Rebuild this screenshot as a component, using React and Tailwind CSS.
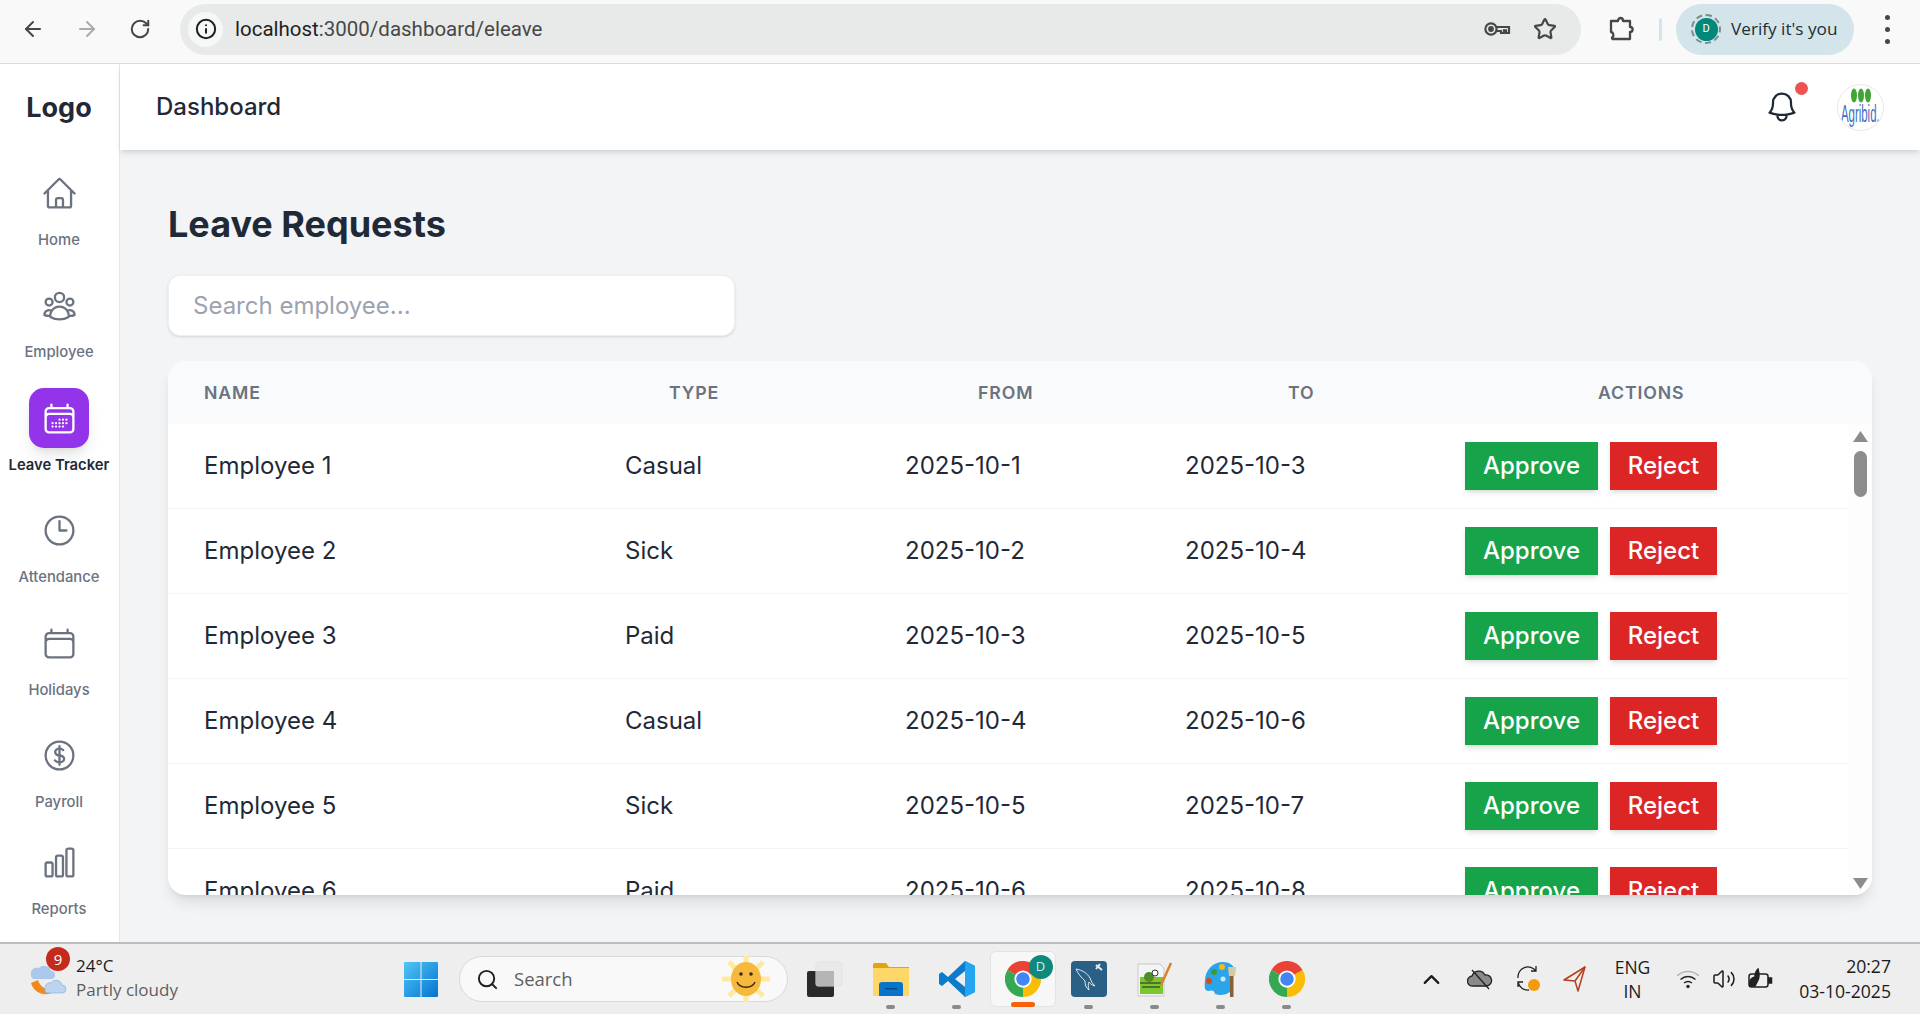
import { ArrowLeft, ArrowRight, RotateCw, Info, Star, ChevronUp, Search, Volume2 } from 'lucide-react';
import {
  HiOutlineHome,
  HiOutlineUserGroup,
  HiOutlineCalendarDays,
  HiOutlineClock,
  HiOutlineCalendar,
  HiOutlineCurrencyDollar,
  HiOutlineChartBar,
  HiOutlineBell,
} from 'react-icons/hi2';

const navItems = [
  { label: 'Home', icon: HiOutlineHome },
  { label: 'Employee', icon: HiOutlineUserGroup },
  { label: 'Leave Tracker', icon: HiOutlineCalendarDays, active: true },
  { label: 'Attendance', icon: HiOutlineClock },
  { label: 'Holidays', icon: HiOutlineCalendar },
  { label: 'Payroll', icon: HiOutlineCurrencyDollar },
  { label: 'Reports', icon: HiOutlineChartBar, tight: true },
];

const leaveTypes = ['Casual', 'Sick', 'Paid'];
const employees = [1, 2, 3, 4, 5, 6].map((n) => ({
  name: `Employee ${n}`,
  type: leaveTypes[(n - 1) % 3],
  from: `2025-10-${n}`,
  to: `2025-10-${n + 2}`,
}));

function ChromeLogo({ size = 36 }) {
  return (
    <svg width={size} height={size} viewBox="0 0 48 48">
      <path d="M24 24L3.2 12A24 24 0 0 1 44.8 12Z" fill="#ea4335" />
      <path d="M24 24L3.2 12A24 24 0 0 0 24 48Z" fill="#34a853" />
      <path d="M24 24L44.8 12A24 24 0 0 1 24 48Z" fill="#fbbc04" />
      <circle cx="24" cy="24" r="11.5" fill="#fff" />
      <circle cx="24" cy="24" r="9" fill="#4285f4" />
    </svg>
  );
}

function KeyIcon() {
  return (
    <svg width="28" height="16" viewBox="0 0 28 16" fill="none" stroke="#474747" strokeWidth="2.2">
      <circle cx="8" cy="8" r="5.6" />
      <circle cx="8" cy="8" r="1.8" fill="#474747" />
      <path d="M13.5 6h12.5v6h-3v-2.6h-2V12h-3V10h-4.5" />
    </svg>
  );
}

function PuzzleIcon() {
  return (
    <svg width="26" height="26" viewBox="0 0 26 26" fill="none" stroke="#474747" strokeWidth="2.3" strokeLinejoin="round">
      <path d="M2 5h7c0-4 5-4 5 0h7v6c3.500 0 3.500 5 0 5v7H3.500l-.5-1 .1-.5c2-1.500 1.700-5-1.100-5.500z" />
    </svg>
  );
}

function WindowsLogo() {
  return (
    <svg width="34" height="35" viewBox="0 0 34 35">
      <defs>
        <linearGradient id="winBlue" x1="0" y1="0" x2="1" y2="1">
          <stop offset="0" stopColor="#4fc6f8" />
          <stop offset="1" stopColor="#0673cf" />
        </linearGradient>
      </defs>
      <path d="M1 0h15.500v17H0V1a1 1 0 0 1 1-1zM17.500 0H33a1 1 0 0 1 1 1v16H17.500zM0 18h16.500v17H1a1 1 0 0 1-1-1zM17.500 18H34v16a1 1 0 0 1-1 1H17.500z" fill="url(#winBlue)" />
    </svg>
  );
}

function WeatherIcon() {
  return (
    <svg width="42" height="46" viewBox="0 0 42 46">
      <path d="M4 27c3 11 17 15 24 7-8 1-15-3-17-10z" fill="#f08a1d" />
      <path d="M4 19a6 6 0 0 1 8-7 7 7 0 0 1 12 3 4 4 0 0 1 0 8H6a4 4 0 0 1-2-4z" fill="#a9c8ec" />
      <path d="M18 33a5 5 0 0 1 6-6 6 6 0 0 1 11 2 4 4 0 0 1 0 8H20a3 3 0 0 1-2-4z" fill="#bcd4ef" stroke="#7fa8d8" strokeWidth="0.6" />
    </svg>
  );
}

function SunFace() {
  return (
    <svg width="60" height="46" viewBox="0 0 60 46">
      <g stroke="#ffe9a0" strokeWidth="5">
        <path d="M30 0v46M6 23h48M13 6l34 34M47 6L13 40" />
      </g>
      <ellipse cx="30" cy="23" rx="15" ry="17" fill="#f6b93b" />
      <circle cx="25" cy="18" r="1.800" fill="#3a2a10" />
      <circle cx="35" cy="18" r="1.800" fill="#3a2a10" />
      <path d="M21 26c3 7 15 7 18 0" fill="none" stroke="#3a2a10" strokeWidth="1.500" />
    </svg>
  );
}

function TaskViewIcon() {
  return (
    <svg width="36" height="36" viewBox="0 0 36 36">
      <rect x="0" y="10" width="27" height="26" rx="2" fill="#2a2a2a" />
      <rect x="9" y="1" width="26" height="24" rx="2" fill="#e8e8e8" fillOpacity="0.9" stroke="#e2e2e2" />
      <rect x="9" y="10" width="18" height="15" fill="#b5b5b5" />
    </svg>
  );
}

function FolderIcon() {
  return (
    <svg width="36" height="34" viewBox="0 0 36 34">
      <path d="M0 3a2 2 0 0 1 2-2h11l3 4h20v29H0z" fill="#e0a410" />
      <rect y="6" width="36" height="28" fill="#ffd768" />
      <path d="M6 23a3 3 0 0 1 3-3h18a3 3 0 0 1 3 3v11H6z" fill="#0a74c9" />
      <rect x="12" y="26" width="12" height="1.500" fill="#064b85" />
    </svg>
  );
}

function VsCodeIcon() {
  return (
    <svg width="36" height="36" viewBox="0 0 36 36">
      <path d="M26 0l10 5v26l-10 5L9 20 3 25l-3-2v-10l3-2 6 5zM26 10l-10 8 10 8z" fill="#0a7ccb" />
      <path d="M26 0l10 5v26l-10 5z" fill="#24a5ef" />
    </svg>
  );
}

function WorkbenchIcon() {
  return (
    <svg width="36" height="36" viewBox="0 0 36 36">
      <rect width="36" height="36" rx="4" fill="#2a5f86" />
      <path d="M5 8c6 1 11 4 14 9 1 3 2 5 5 8-3-1-5-2-6-4-1 2-1 5 0 8-3-2-4-5-4-9-3-3-7-7-9-12z" fill="none" stroke="#dfe8ee" strokeWidth="1" />
      <path d="M25 4l6 5M29 3l-4 5" stroke="#e7eef3" strokeWidth="2" />
    </svg>
  );
}

function NotepadIcon() {
  return (
    <svg width="36" height="36" viewBox="0 0 36 36">
      <path d="M1 3h22l4 4v28H1z" fill="#f4f4f4" stroke="#c9c9c9" />
      <rect x="3" y="16" width="23" height="17" fill="#7cc62f" />
      <circle cx="12" cy="16" r="5" fill="#4f8f22" />
      <circle cx="18" cy="12" r="3" fill="#fff" stroke="#333" />
      <path d="M3 22h22M5 26h18" stroke="#222" strokeWidth="1" />
      <path d="M24 24L34 2" stroke="#d9822b" strokeWidth="2.500" />
    </svg>
  );
}

function PaintIcon() {
  return (
    <svg width="34" height="36" viewBox="0 0 34 36">
      <path d="M1 20C1 8 10 1 19 1c6 0 10 3 11 6l-4 24c-4 3-10 4-15 2-1-5-4-3-7-3-3 0-4-4-3-10z" fill="#2aa5ea" />
      <circle cx="10" cy="11" r="3" fill="#3a9a3a" />
      <circle cx="18" cy="6" r="3" fill="#f5b81d" />
      <circle cx="5" cy="20" r="3" fill="#d94a1e" />
      <circle cx="19" cy="18" r="2.500" fill="#cfe8f8" />
      <rect x="26" y="14" width="3.500" height="22" fill="#8b5e34" />
      <path d="M24 6h8l-1 9h-6z" fill="#d9c8a0" />
    </svg>
  );
}

function CloudOffIcon() {
  return (
    <svg width="26" height="22" viewBox="0 0 26 22" fill="#8a8a8a" stroke="#222" strokeWidth="1.300">
      <path d="M6 18a5 5 0 0 1-1-10 7 7 0 0 1 13-1 5.500 5.500 0 0 1 2 11z" />
      <path d="M5 2l17 19" fill="none" />
    </svg>
  );
}

function SyncIcon() {
  return (
    <svg width="26" height="28" viewBox="0 0 26 28" fill="none" stroke="#222" strokeWidth="1.300">
      <path d="M2 13A10 10 0 0 1 20 6M20 1v5h-5M2 22v-5h5M2 17a10 10 0 0 0 11 8" />
      <circle cx="18" cy="20" r="6" fill="#f59a0c" stroke="none" />
    </svg>
  );
}

function SendIcon() {
  return (
    <svg width="24" height="26" viewBox="0 0 24 26" fill="none" stroke="#b1401c" strokeWidth="1.500" strokeLinejoin="round">
      <path d="M22 1L1 14l11 1 3 10z" />
      <path d="M22 1L12 15" />
    </svg>
  );
}

function WifiIcon() {
  return (
    <svg width="24" height="20" viewBox="0 0 24 20" fill="none" strokeWidth="1.500">
      <path d="M1 7c6-6 16-6 22 0" stroke="#b5b5b5" />
      <path d="M4.500 10.500c4.500-4 10.500-4 15 0M8 14c2.500-2 5.500-2 8 0" stroke="#222" />
      <circle cx="12" cy="17.500" r="1.700" fill="#222" />
    </svg>
  );
}

function BatteryIcon() {
  return (
    <svg width="26" height="22" viewBox="0 0 26 22" fill="none" stroke="#222" strokeWidth="1.500">
      <rect x="2" y="6" width="19" height="13" rx="2.500" />
      <rect x="21.500" y="10" width="3" height="5" fill="#222" />
      <path d="M3 18c-1-5 1-8 5-9 0-3 1-6 3-8 1 4 2 7 0 11l-3 6z" fill="#222" />
    </svg>
  );
}

function SidebarItem({ label, icon: Icon, active, tight }) {
  return (
    <div className={`flex flex-col items-center ${tight ? 'mt-[-6px]' : ''}`}>
      <div className={`flex h-[60px] w-[60px] items-center justify-center rounded-[15px] ${active ? 'bg-[#9333ea] shadow-lg' : ''}`}>
        <Icon className={`h-[37px] w-[37px] ${active ? 'text-white' : 'text-[#6b7280]'}`} />
      </div>
      <span className={`mt-[6.500px] whitespace-nowrap text-[14.800px] leading-[20px] ${active ? 'font-semibold text-[#1f2937]' : 'font-medium text-[#6b7280]'}`}>
        {label}
      </span>
    </div>
  );
}

function TaskbarApp({ children, className = '', dot = true }) {
  return (
    <div className={`relative flex h-[56px] w-[66px] items-center justify-center ${className}`}>
      {children}
      {dot && <span className="absolute bottom-[-2px] h-[4px] w-[9px] rounded-full bg-[#8a8a8a]" />}
    </div>
  );
}

export default function App() {
  return (
    <div className="flex h-screen w-full flex-col overflow-hidden bg-[#f3f4f6] font-['Inter',sans-serif]">
      {/* browser toolbar */}
      <div className="flex h-[64px] shrink-0 items-center border-b border-[#dddddd] bg-[#f9f9f9] pb-[5px] pl-[21px] font-['Roboto',sans-serif]">
        <ArrowLeft className="h-[24px] w-[24px] text-[#474747]" strokeWidth={2} />
        <ArrowRight className="ml-[30px] h-[24px] w-[24px] text-[#ababab]" strokeWidth={2} />
        <RotateCw className="ml-[30px] h-[22px] w-[22px] text-[#474747]" strokeWidth={2.2} />
        <div className="ml-[29px] flex h-[51px] w-[1401px] items-center rounded-full bg-[#e8eaea] pl-[8px] pr-[24px]">
          <div className="flex h-[35px] w-[35px] items-center justify-center rounded-full bg-[#f6f7f7]">
            <Info className="h-[22px] w-[22px] text-[#1f1f1f]" strokeWidth={2.2} />
          </div>
          <span className="ml-[12px] text-[20.5px] text-[#474747]">
            <span className="text-[#1f1f1f]">localhost</span>:3000/dashboard/eleave
          </span>
          <div className="ml-auto flex items-center gap-[22px]">
            <KeyIcon />
            <Star className="h-[24px] w-[24px] text-[#474747]" strokeWidth={2.2} />
          </div>
        </div>
        <div className="ml-[28px]">
          <PuzzleIcon />
        </div>
        <div className="ml-[24px] h-[23px] w-[3px] rounded bg-[#d3e5ea]" />
        <div className="ml-[14px] flex h-[51px] w-[178px] items-center rounded-full bg-[#d3e5ea] pl-[15px]">
          <div className="flex h-[30px] w-[30px] items-center justify-center rounded-full border-2 border-dashed border-[#7b8a8c]">
            <div className="flex h-[23px] w-[23px] items-center justify-center rounded-full bg-[#00897b] text-[11px] text-white">D</div>
          </div>
          <span className="ml-[10px] whitespace-nowrap font-['Open_Sans',sans-serif] text-[17.2px] text-[#1f2d33]">Verify it's you</span>
        </div>
        <div className="ml-[31px] flex flex-col gap-[7px]">
          <span className="h-[5px] w-[5px] rounded-full bg-[#474747]" />
          <span className="h-[5px] w-[5px] rounded-full bg-[#474747]" />
          <span className="h-[5px] w-[5px] rounded-full bg-[#474747]" />
        </div>
      </div>

      <div className="flex min-h-0 flex-1">
        {/* sidebar */}
        <aside className="flex w-[120px] shrink-0 flex-col border-r border-[#e5e7eb] bg-white pr-px">
          <div className="flex h-[86px] shrink-0 items-center justify-center pt-[3px] text-[27px] font-bold text-[#1f2937]">Logo</div>
          <nav className="flex flex-col gap-[26px] pt-[13px]">
            {navItems.map((item) => (
              <SidebarItem key={item.label} {...item} />
            ))}
          </nav>
        </aside>

        <div className="flex min-w-0 flex-1 flex-col">
          {/* top header */}
          <header className="relative z-10 flex h-[86px] shrink-0 items-center justify-between bg-white pl-[36px] pr-[36px] shadow-md">
            <h1 className="text-[24px] font-medium text-[#1f2937]">Dashboard</h1>
            <div className="flex items-center gap-[37px]">
              <div className="relative">
                <HiOutlineBell className="h-[36px] w-[36px] text-[#1f2937]" />
                <span className="absolute right-[-8px] top-[-7px] h-[13px] w-[13px] rounded-full bg-[#f05252]" />
              </div>
              <div className="flex h-[47px] w-[47px] flex-col items-center overflow-hidden rounded-full border border-[#e8e8e8] bg-white">
                <svg width="22" height="15" viewBox="0 0 22 15" className="mt-[3px] shrink-0">
                  <ellipse cx="4" cy="7.500" rx="3" ry="7" fill="#3fa535" />
                  <ellipse cx="11" cy="7.500" rx="3" ry="7" fill="#3fa535" />
                  <ellipse cx="18" cy="7.500" rx="3" ry="7" fill="#3fa535" />
                </svg>
                <span className="scale-x-[0.52] scale-y-[1.1] whitespace-nowrap font-['Liberation_Sans',sans-serif] text-[22px] leading-[22px] text-[#3f6fbf]">Agribid.</span>
              </div>
            </div>
          </header>

          {/* page content */}
          <main className="min-h-0 flex-1 overflow-hidden px-[48px] pt-[48px]">
            <h2 className="text-[36px] font-bold leading-[52px] text-[#1f2937]">Leave Requests</h2>
            <input
              placeholder="Search employee..."
              className="mt-[25px] block h-[61px] w-[567px] rounded-[12px] border border-[#eeeff1] bg-white px-[24px] text-[24px] text-[#1f2937] shadow-sm outline-none placeholder:text-[#9ca3af]"
            />

            <div className="mt-[25px] flex h-[534px] flex-col overflow-hidden rounded-[18px] bg-white shadow-lg">
              <div className="grid h-[63px] shrink-0 grid-cols-[465px_309px_310px_310px_1fr] items-center bg-[#f9fafb] pl-[36px] pt-px text-[17.700px] font-semibold uppercase tracking-[0.05em] text-[#6b7280]">
                <span>Name</span>
                <span>Type</span>
                <span>From</span>
                <span>To</span>
                <span>Actions</span>
              </div>

              <div className="flex min-h-0 flex-1">
                <div className="min-w-0 flex-1 overflow-hidden">
                  {employees.map((emp) => (
                    <div
                      key={emp.name}
                      className="grid h-[85px] grid-cols-[421px_280px_280px_280px_1fr] items-center border-b border-[#f3f4f6] pl-[36px] text-[24px] text-[#1f2937]"
                    >
                      <span>{emp.name}</span>
                      <span>{emp.type}</span>
                      <span>{emp.from}</span>
                      <span>{emp.to}</span>
                      <div className="flex gap-[12px] font-medium text-white">
                        <button className="h-[48px] w-[133px] bg-[#16a34a] shadow-md">Approve</button>
                        <button className="h-[48px] w-[107px] bg-[#dc2626] shadow-md">Reject</button>
                      </div>
                    </div>
                  ))}
                </div>

                {/* scrollbar */}
                <div className="flex w-[23px] shrink-0 flex-col items-center bg-[#fdfdfd] pb-[6px] pt-[7px]">
                  <svg width="15" height="11" viewBox="0 0 15 11"><path d="M7.500 0L15 11H0z" fill="#8c8c8c" /></svg>
                  <div className="mt-[9px] h-[46px] w-[13px] rounded-full bg-[#8c8c8c]" />
                  <svg width="15" height="11" viewBox="0 0 15 11" className="mt-auto"><path d="M0 0h15L7.500 11z" fill="#8c8c8c" /></svg>
                </div>
              </div>
            </div>
          </main>
        </div>
      </div>

      {/* windows taskbar */}
      <footer className="flex h-[72px] shrink-0 items-center border-t-2 border-[#bdbdbd] bg-[#eeeeee] font-['Open_Sans',sans-serif]">
        <div className="relative ml-[27px] flex w-[377px] shrink-0 items-center">
          <WeatherIcon />
          <span className="absolute left-[19px] top-[-9px] flex h-[24px] w-[24px] items-center justify-center rounded-full bg-[#c42b1c] text-[15px] text-white">9</span>
          <div className="ml-[7px] mt-[-2px] leading-[24px]">
            <div className="text-[17px] text-[#1b1b1b]">24°C</div>
            <div className="text-[17px] text-[#5f5f5f]">Partly cloudy</div>
          </div>
        </div>
        <WindowsLogo />
        <div className="ml-[21px] flex h-[46px] w-[329px] shrink-0 items-center rounded-full border border-[#d9d9d9] bg-[#f9f9f9] pl-[16px] pr-[11px]">
          <Search className="h-[23px] w-[23px] text-[#1f1f1f]" strokeWidth={2} />
          <span className="ml-[15px] text-[18.500px] text-[#5f5f5f]">Search</span>
          <div className="ml-auto"><SunFace /></div>
        </div>
        <div className="ml-[3.500px] flex items-center">
          <TaskbarApp dot={false}><TaskViewIcon /></TaskbarApp>
          <TaskbarApp><FolderIcon /></TaskbarApp>
          <TaskbarApp><VsCodeIcon /></TaskbarApp>
          <TaskbarApp dot={false} className="rounded-[6px] border border-[#e3e3e3] bg-[#f7f7f7]">
            <ChromeLogo />
            <span className="absolute right-[2px] top-[3px] flex h-[24px] w-[24px] items-center justify-center rounded-full bg-[#0d8a7c] text-[13px] text-[#cfeee9]">D</span>
            <span className="absolute bottom-[-1px] h-[5px] w-[24px] rounded-full bg-[#f7630c]" />
          </TaskbarApp>
          <TaskbarApp><WorkbenchIcon /></TaskbarApp>
          <TaskbarApp><NotepadIcon /></TaskbarApp>
          <TaskbarApp><PaintIcon /></TaskbarApp>
          <TaskbarApp><ChromeLogo /></TaskbarApp>
        </div>
        <div className="ml-[98px] flex items-center text-[#1b1b1b]">
          <ChevronUp className="h-[27px] w-[27px]" strokeWidth={2} />
          <div className="ml-[22px]"><CloudOffIcon /></div>
          <div className="ml-[23px]"><SyncIcon /></div>
          <div className="ml-[21px]"><SendIcon /></div>
          <div className="ml-[24px] w-[44px] text-center text-[17.500px] leading-[24px]">
            <div>ENG</div>
            <div>IN</div>
          </div>
          <div className="ml-[21px]"><WifiIcon /></div>
          <Volume2 className="ml-[12px] h-[24px] w-[24px]" strokeWidth={1.500} />
          <div className="ml-[11px]"><BatteryIcon /></div>
        </div>
        <div className="ml-auto pr-[29px] text-right text-[17.600px] leading-[25px] text-[#1b1b1b]">
          <div>20:27</div>
          <div>03-10-2025</div>
        </div>
      </footer>
    </div>
  );
}
